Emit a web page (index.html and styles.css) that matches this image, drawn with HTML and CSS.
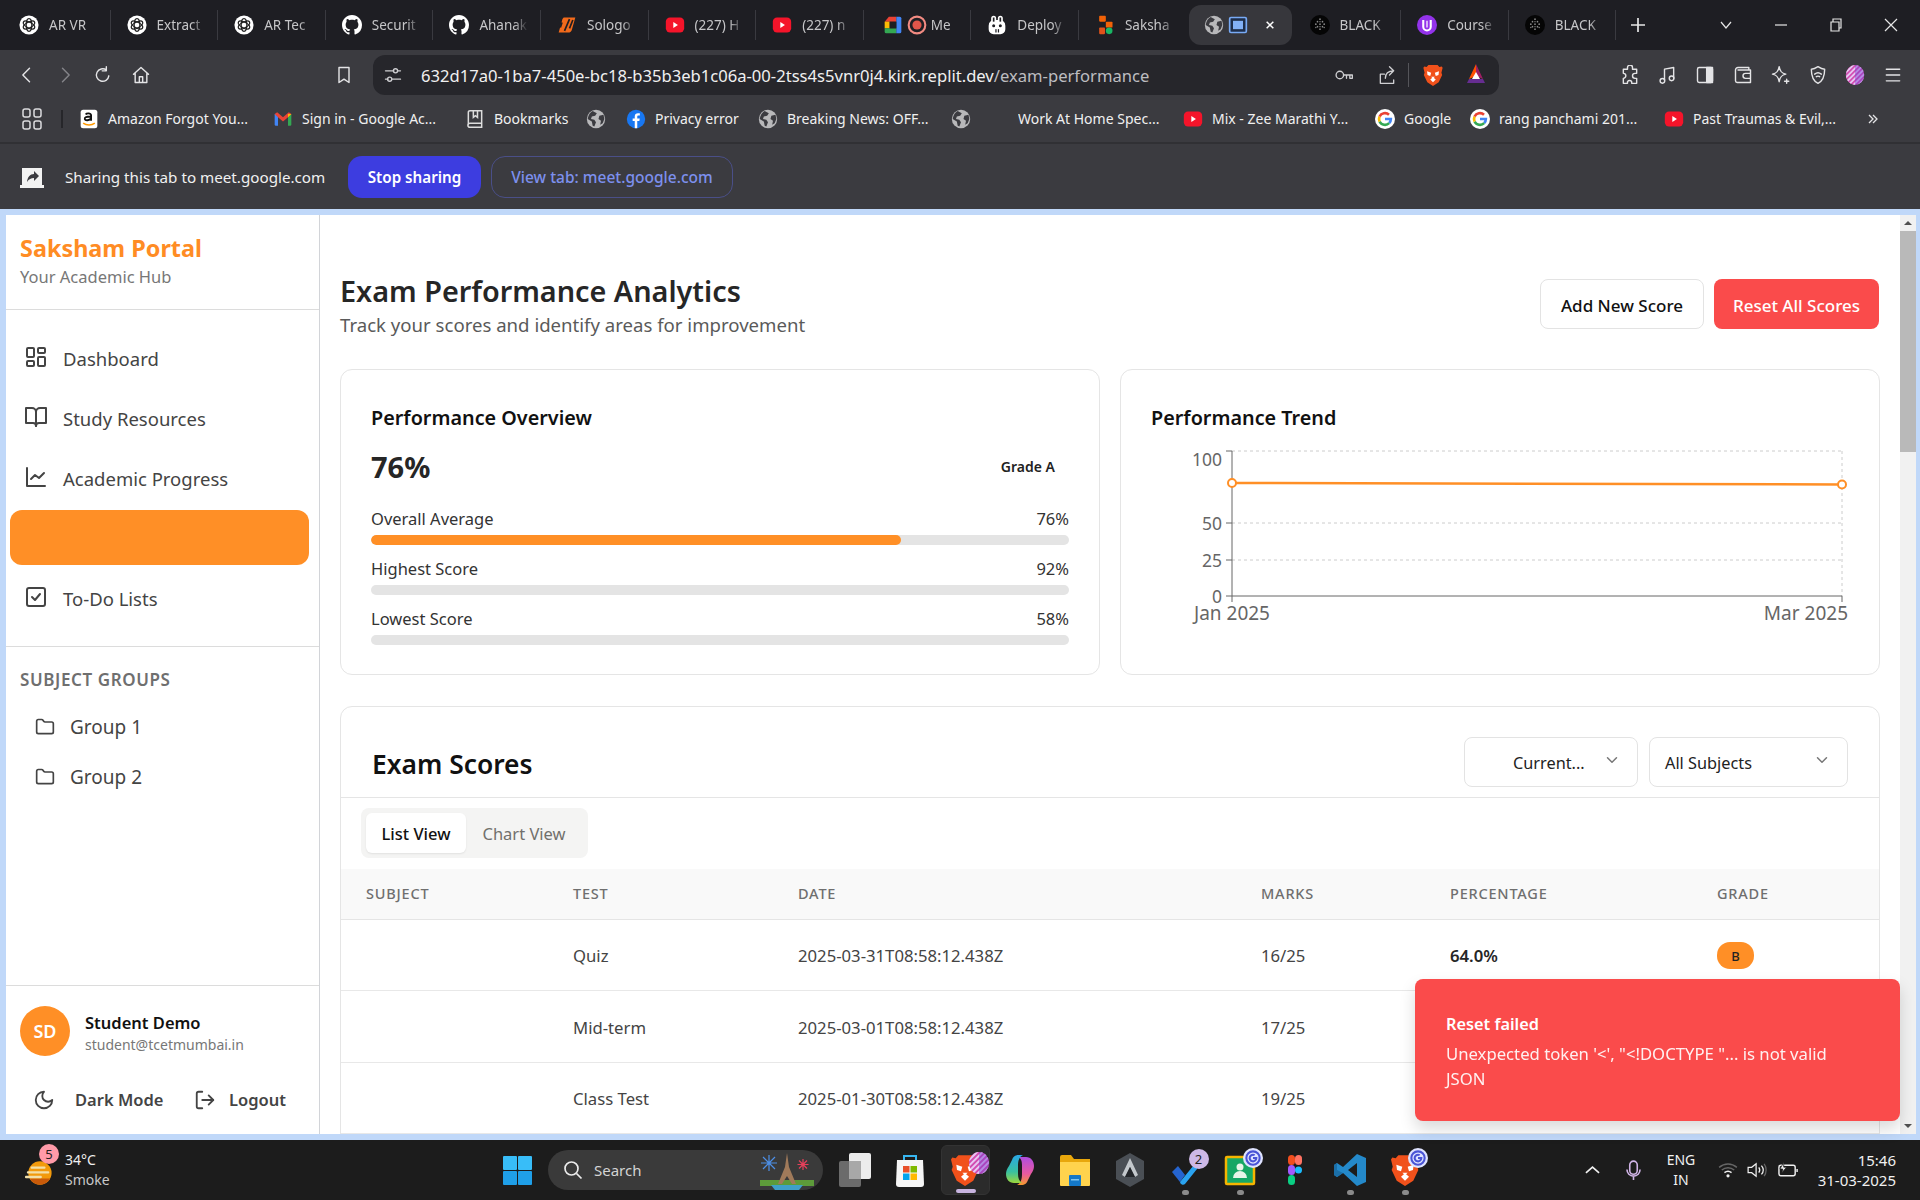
FILE: index.html
```html
<!DOCTYPE html>
<html lang="en">
<head>
<meta charset="utf-8">
<title>Exam Performance Analytics</title>
<link rel="stylesheet" href="styles.css">
</head>
<body>
<svg class="sprite" xmlns="http://www.w3.org/2000/svg">
  <defs>
    <linearGradient id="copA" x1="0" y1="0" x2="0" y2="1"><stop offset="0" stop-color="#2aa7e6"/><stop offset=".6" stop-color="#39c0a0"/><stop offset="1" stop-color="#9bd63c"/></linearGradient>
    <linearGradient id="copB" x1="0" y1="0" x2="0" y2="1"><stop offset="0" stop-color="#b04de0"/><stop offset=".6" stop-color="#e85aa0"/><stop offset="1" stop-color="#f59a2c"/></linearGradient>
  </defs>
  <symbol id="openai" viewBox="0 0 24 24"><circle cx="12" cy="12" r="11.5" fill="#fff"/><g fill="none" stroke="#222" stroke-width="1.5"><ellipse cx="12" cy="12" rx="3.4" ry="7.6"/><ellipse cx="12" cy="12" rx="3.4" ry="7.6" transform="rotate(60 12 12)"/><ellipse cx="12" cy="12" rx="3.4" ry="7.6" transform="rotate(120 12 12)"/></g></symbol>
  <symbol id="github" viewBox="0 0 16 16"><circle cx="8" cy="8" r="8" fill="#1e1e23"/><path fill="#fff" d="M8 0C3.58 0 0 3.58 0 8c0 3.54 2.29 6.53 5.47 7.59.4.07.55-.17.55-.38 0-.19-.01-.82-.01-1.49-2.01.37-2.53-.49-2.69-.94-.09-.23-.48-.94-.82-1.13-.28-.15-.68-.52-.01-.53.63-.01 1.08.58 1.23.82.72 1.21 1.87.87 2.33.66.07-.52.28-.87.51-1.07-1.78-.2-3.64-.89-3.64-3.95 0-.87.31-1.59.82-2.15-.08-.2-.36-1.02.08-2.12 0 0 .67-.21 2.2.82.64-.18 1.32-.27 2-.27.68 0 1.36.09 2 .27 1.53-1.04 2.2-.82 2.2-.82.44 1.1.16 1.92.08 2.12.51.56.82 1.27.82 2.15 0 3.07-1.87 3.75-3.65 3.95.29.25.54.73.54 1.48 0 1.07-.01 1.93-.01 2.2 0 .21.15.46.55.38A8.013 8.013 0 0016 8c0-4.42-3.58-8-8-8z"/></symbol>
  <symbol id="sologo" viewBox="0 0 24 24"><path fill="#f26a1b" d="M8 3h14l-4 14a5 5 0 0 1-5 4H2L6 7a5 5 0 0 1 2-4z"/><path fill="none" stroke="#1e1e23" stroke-width="2" d="M15 5 9 19M19 6l-4 10M6 9l-2 6"/></symbol>
  <symbol id="youtube" viewBox="0 0 24 24"><rect x="1" y="3" width="22" height="18" rx="5" fill="#f5142a"/><path fill="#fff" d="m10 8.500 5.500 3.500-5.500 3.500z"/></symbol>
  <symbol id="gmeet" viewBox="0 0 24 24"><path fill="#ea4335" d="M7 2h9v6H2z"/><path fill="#fbbc04" d="M2 8h6v8H2z"/><path fill="#34a853" d="M8 16h8v6H4a2 2 0 0 1-2-2v-4z"/><path fill="#4285f4" d="M16 2h4a2 2 0 0 1 2 2v16a2 2 0 0 1-2 2h-4z"/><rect x="8" y="8" width="8" height="8" fill="#1e1e23"/></symbol>
  <symbol id="rec" viewBox="0 0 24 24"><circle cx="12" cy="12" r="10" fill="none" stroke="#f28b82" stroke-width="2.500"/><circle cx="12" cy="12" r="5.500" fill="#e0554a"/></symbol>
  <symbol id="deploy" viewBox="0 0 24 24"><path fill="#fff" d="M8 1a3 3 0 0 1 3 3v2h2V4a3 3 0 0 1 6 0v3a7 7 0 0 1 3 6v4a6 6 0 0 1-6 6H8a6 6 0 0 1-6-6v-4a7 7 0 0 1 3-6V4a3 3 0 0 1 3-3z"/><g fill="#1e1e23"><rect x="7" y="3" width="2" height="5"/><rect x="15" y="3" width="2" height="5"/><circle cx="8" cy="13" r="1.800"/><circle cx="16" cy="13" r="1.800"/><rect x="10" y="17" width="1.500" height="4"/><rect x="13" y="17" width="1.500" height="4"/></g></symbol>
  <symbol id="saksham" viewBox="0 0 24 24"><rect x="5" y="1" width="8" height="7" rx="1" fill="#f26207"/><rect x="13" y="8" width="8" height="7" rx="1" fill="#f26207"/><rect x="5" y="15" width="7" height="8" rx="1" fill="#e0521a"/><circle cx="17" cy="19" r="4" fill="#19b664"/></symbol>
  <symbol id="globe" viewBox="0 0 24 24"><circle cx="12" cy="12" r="11" fill="#b8b8ba"/><path fill="#3b3b40" d="M8 2.500 13 5l-2 3-4 1-1 3 4 1 2 3-2 5-2-1-1-5-5-3C3 7 5 4 8 2.500zM16 8l5-1 1 5-2 5-3 2 1-5-3-2z"/></symbol>
  <symbol id="tabpreview" viewBox="0 0 24 24"><rect x="2" y="3" width="20" height="18" rx="1.500" fill="#1e2e4a" stroke="#78aaf5" stroke-width="2"/><rect x="6" y="7" width="12" height="10" fill="#82b1f7"/></symbol>
  <symbol id="black" viewBox="0 0 24 24"><circle cx="12" cy="12" r="12" fill="#050505"/><g fill="#8b8b8b"><circle cx="12" cy="5" r="1"/><circle cx="9" cy="8" r="1"/><circle cx="15" cy="8" r="1"/><circle cx="7" cy="11" r="1"/><circle cx="12" cy="11" r="1"/><circle cx="17" cy="11" r="1"/><circle cx="9" cy="14" r="1"/><circle cx="15" cy="14" r="1"/><circle cx="12" cy="17" r="1"/><circle cx="7" cy="15" r=".8"/><circle cx="17" cy="15" r=".8"/><circle cx="12" cy="14" r=".8"/><circle cx="12" cy="8" r=".8"/></g></symbol>
  <symbol id="course" viewBox="0 0 24 24"><circle cx="12" cy="12" r="12" fill="#9333ea"/><path fill="none" stroke="#fff" stroke-width="2.500" d="M7.500 6v8a4.500 4.500 0 0 0 9 0V6"/><path fill="none" stroke="#fff" stroke-width="1.500" d="M12 7v8"/></symbol>
  <symbol id="brave" viewBox="0 0 24 24"><path fill="#f1511b" d="M7 1h10l2 2.200 2.500-.5 1 1.500-1.300 5.300.8 2.500-3.800 8L12 24l-6.200-4-3.800-8 .8-2.500L1.500 4.200l1-1.500 2.500.5z"/><path fill="#fff" d="M5.500 8 10 9.500 9 13l-3-1zM18.500 8 14 9.500l1 3.500 3-1zM12 14.500l3 2.500-3 3-3-3z"/><path fill="#fff" d="M10 14h4l-2 2z"/></symbol>
  <symbol id="bat" viewBox="0 0 24 24"><path fill="#ff5000" d="M12 1 5 16l7-3z"/><path fill="#9e1f63" d="M12 1l7 15-7-3z"/><path fill="#662d91" d="M3 20h18l-2-4H5z"/><path fill="#fff" d="m12 9 4 7H8z"/></symbol>
  <symbol id="striped" viewBox="0 0 24 24"><clipPath id="ball"><ellipse cx="12" cy="12" rx="11" ry="12"/></clipPath><g clip-path="url(#ball)"><rect width="24" height="24" fill="#d24bb0"/><path stroke="#e7c6f2" stroke-width="2.200" d="M-2 12 12-2M-2 18 18-2M-2 24 24-2M2 26 26 2M8 26 26 8M14 26 26 14"/><path fill="#7a3fd0" opacity=".45" d="M12 0h12v24H12z"/></g></symbol>
  <symbol id="gmail" viewBox="0 0 24 24"><path fill="#4285f4" d="M2 6h4v14H3a1 1 0 0 1-1-1z"/><path fill="#34a853" d="M18 6h4v13a1 1 0 0 1-1 1h-3z"/><path fill="#ea4335" d="M2 6l3-2 7 6 7-6 3 2-4 4-6 5-6-5z"/><path fill="#fbbc04" d="m18 6 4 0-4 4z"/></symbol>
  <symbol id="bookmarks" viewBox="0 0 24 24"><g fill="none" stroke="#ddd" stroke-width="1.800"><path d="M4 19V4a2 2 0 0 1 2-2h14v15H6a2.500 2.500 0 0 0 0 5h14v-5"/><path d="M10 2v8l2.500-2 2.500 2V2"/></g></symbol>
  <symbol id="facebook" viewBox="0 0 24 24"><circle cx="12" cy="12" r="11" fill="#1877f2"/><path fill="#fff" d="M13.500 23v-8.500H16l.5-3h-3V9.500c0-1 .4-1.600 1.700-1.600h1.400V5.200c-.5-.1-1.300-.2-2.300-.2-2.300 0-3.800 1.400-3.800 3.900v2.600H8v3h2.500V23z"/></symbol>
  <symbol id="google" viewBox="0 0 24 24"><circle cx="12" cy="12" r="12" fill="#fff"/><path fill="none" stroke="#4285f4" stroke-width="3.200" d="M12 12h7a7.200 7.200 0 0 1-2 5"/><path fill="none" stroke="#34a853" stroke-width="3.200" d="M17 17a7.200 7.200 0 0 1-11.500-2"/><path fill="none" stroke="#fbbc04" stroke-width="3.200" d="M5.500 15a7.200 7.200 0 0 1 0-6"/><path fill="none" stroke="#ea4335" stroke-width="3.200" d="M5.500 9a7.200 7.200 0 0 1 11.300-2.200"/></symbol>
  <symbol id="dash" viewBox="0 0 24 24"><g fill="none" stroke="currentColor" stroke-width="2"><rect x="3" y="3" width="7" height="9" rx="1"/><rect x="14" y="3" width="7" height="5" rx="1"/><rect x="14" y="12" width="7" height="9" rx="1"/><rect x="3" y="16" width="7" height="5" rx="1"/></g></symbol>
  <symbol id="book" viewBox="0 0 24 24"><g fill="none" stroke="currentColor" stroke-width="2" stroke-linejoin="round"><path d="M2 3h6a4 4 0 0 1 4 4v14a3 3 0 0 0-3-3H2z"/><path d="M22 3h-6a4 4 0 0 0-4 4v14a3 3 0 0 1 3-3h7z"/></g></symbol>
  <symbol id="chart" viewBox="0 0 24 24"><g fill="none" stroke="currentColor" stroke-width="2" stroke-linecap="round" stroke-linejoin="round"><path d="M3 3v18h18"/><path d="m20 8-5 5-4-3-4 4"/></g></symbol>
  <symbol id="check" viewBox="0 0 24 24"><g fill="none" stroke="currentColor" stroke-width="2" stroke-linecap="round" stroke-linejoin="round"><rect x="3" y="3" width="18" height="18" rx="2"/><path d="m8 12 3 3 5-6"/></g></symbol>
  <symbol id="folder" viewBox="0 0 24 24"><path fill="none" stroke="currentColor" stroke-width="2" stroke-linejoin="round" d="M20 20a2 2 0 0 0 2-2V8a2 2 0 0 0-2-2h-7.900a2 2 0 0 1-1.690-.9L9.600 3.900A2 2 0 0 0 7.930 3H4a2 2 0 0 0-2 2v13a2 2 0 0 0 2 2Z"/></symbol>
  <symbol id="moon" viewBox="0 0 24 24"><path fill="none" stroke="currentColor" stroke-width="2" stroke-linejoin="round" d="M12 3a6 6 0 0 0 9 9 9 9 0 1 1-9-9Z"/></symbol>
  <symbol id="logout" viewBox="0 0 24 24"><g fill="none" stroke="currentColor" stroke-width="2" stroke-linecap="round" stroke-linejoin="round"><path d="M9 21H5a2 2 0 0 1-2-2V5a2 2 0 0 1 2-2h4"/><path d="m16 17 5-5-5-5"/><path d="M21 12H9"/></g></symbol>
  <symbol id="chev" viewBox="0 0 24 24"><path fill="none" stroke="currentColor" stroke-width="2" stroke-linecap="round" stroke-linejoin="round" d="m6 9 6 6 6-6"/></symbol>
</svg>

<header class="tabs">
  <div class="tab"><svg class="fav"><use href="#openai"/></svg><span class="tab-text">AR VR</span></div>
  <div class="tab"><svg class="fav"><use href="#openai"/></svg><span class="tab-text">Extract</span></div>
  <div class="tab"><svg class="fav"><use href="#openai"/></svg><span class="tab-text">AR Tec</span></div>
  <div class="tab"><svg class="fav"><use href="#github"/></svg><span class="tab-text">Securit</span></div>
  <div class="tab"><svg class="fav"><use href="#github"/></svg><span class="tab-text">Ahanak</span></div>
  <div class="tab"><svg class="fav"><use href="#sologo"/></svg><span class="tab-text">Sologo</span></div>
  <div class="tab"><svg class="fav"><use href="#youtube"/></svg><span class="tab-text">(227) H</span></div>
  <div class="tab"><svg class="fav"><use href="#youtube"/></svg><span class="tab-text">(227) n</span></div>
  <div class="tab tab-meet"><svg class="fav"><use href="#gmeet"/></svg><svg class="fav"><use href="#rec"/></svg><span class="tab-text">Me</span></div>
  <div class="tab"><svg class="fav"><use href="#deploy"/></svg><span class="tab-text">Deploy</span></div>
  <div class="tab tab-last"><svg class="fav"><use href="#saksham"/></svg><span class="tab-text">Saksha</span></div>
  <div class="tab-active"><svg class="fav"><use href="#globe"/></svg><svg class="fav"><use href="#tabpreview"/></svg><svg class="tab-x" viewBox="0 0 12 12"><path d="M2 2l8 8M10 2l-8 8"/></svg></div>
  <div class="tab"><svg class="fav"><use href="#black"/></svg><span class="tab-text">BLACK</span></div>
  <div class="tab"><svg class="fav"><use href="#course"/></svg><span class="tab-text">Course</span></div>
  <div class="tab"><svg class="fav"><use href="#black"/></svg><span class="tab-text">BLACK</span></div>
  <svg class="tab-plus" viewBox="0 0 14 14"><path d="M7 0v14M0 7h14"/></svg>
  <div class="win-controls">
    <svg class="win-icon" viewBox="0 0 14 14"><path d="m2 4 5 6 5-6"/></svg>
    <svg class="win-icon" viewBox="0 0 14 14"><path d="M1 7h12"/></svg>
    <svg class="win-icon" viewBox="0 0 14 14"><path d="M2 4h8v9H2zM4 4V1h8v9h-2"/></svg>
    <svg class="win-icon" viewBox="0 0 14 14"><path d="m1 1 12 12M13 1 1 13"/></svg>
  </div>
</header>

<nav class="toolbar">
  <div class="tool-group">
    <svg class="tool-icon" viewBox="0 0 24 24"><path d="m15 4-8 8 8 8"/></svg>
    <svg class="tool-icon tool-dim" viewBox="0 0 24 24"><path d="m9 4 8 8-8 8"/></svg>
    <svg class="tool-icon" viewBox="0 0 24 24"><path d="M19 13a7.500 7.500 0 1 1-3-7M16 2v5h-5"/></svg>
    <svg class="tool-icon" viewBox="0 0 24 24"><path d="M3 11 12 3l9 8M5 10v11h14V10M10 21v-7h4v7"/></svg>
  </div>
  <svg class="tool-icon tool-bookmark" viewBox="0 0 24 24"><path d="M6 3h12v18l-6-4-6 4z"/></svg>
  <div class="address">
    <svg class="tool-icon tool-small" viewBox="0 0 24 24"><path d="M3 7h10M18 7h3M3 17h3M11 17h10"/><circle cx="15" cy="7" r="2.500"/><circle cx="8" cy="17" r="2.500"/></svg>
    <span class="url">632d17a0-1ba7-450e-bc18-b35b3eb1c06a-00-2tss4s5vnr0j4.kirk.replit.dev<span class="url-path">/exam-performance</span></span>
    <div class="address-right">
      <svg class="tool-icon tool-small" viewBox="0 0 24 24"><circle cx="7" cy="12" r="4.500"/><path d="M11.500 12H22v4h-3v-3M15 13v3"/></svg>
      <svg class="tool-icon tool-small tool-share" viewBox="0 0 24 24"><path d="M4 22V11h5M4 22h16v-4M10 16c0-6 4-9 10-9M15 2l5 5-5 5"/></svg>
      <span class="address-sep"></span>
      <svg class="ext-brave"><use href="#brave"/></svg>
      <svg class="ext-bat"><use href="#bat"/></svg>
    </div>
  </div>
  <div class="tool-ext">
    <svg class="tool-icon" viewBox="0 0 24 24"><path d="M9 3a3 3 0 0 1 6 0v2h5v5h-2a3 3 0 0 0 0 6h2v6h-6v-2a3 3 0 0 0-5 0v2H4v-6a3 3 0 0 0 0-6V5h5z"/></svg>
    <svg class="tool-icon" viewBox="0 0 24 24"><path d="M9 18V5l11-2v13"/><circle cx="6.500" cy="19" r="2.800"/><circle cx="17.500" cy="16" r="2.800"/></svg>
    <svg class="tool-icon" viewBox="0 0 24 24"><rect x="3" y="3" width="18" height="18" rx="2"/><rect class="tool-fill" x="14" y="3" width="7" height="18"/></svg>
    <svg class="tool-icon" viewBox="0 0 24 24"><path d="M19 6V3H6a3 3 0 0 0-3 3v13a2 2 0 0 0 2 2h16V6H6M21 10h-6a3 3 0 0 0 0 6h6"/></svg>
    <svg class="tool-icon" viewBox="0 0 24 24"><path d="M11 2c1 6 3 8 8 9-5 1-7 3-8 9-1-6-3-8-8-9 5-1 7-3 8-9zM20 17v5M17.500 19.500h5"/></svg>
    <svg class="tool-icon" viewBox="0 0 24 24"><path d="M12 2c3 2 5 3 8 3 0 9-2 14-8 17C6 19 4 14 4 5c3 0 5-1 8-3z"/><path d="M8 11c2.500-2 5.500-2 8 0M10 14c1.500-1 2.500-1 4 0"/></svg>
    <svg class="ext-profile"><use href="#striped"/></svg>
    <svg class="tool-icon" viewBox="0 0 24 24"><path d="M4 5h16M4 12h16M4 19h16"/></svg>
  </div>
</nav>

<div class="bookmarks">
  <svg class="apps" viewBox="0 0 20 22"><g><rect x="1" y="1" width="7" height="8" rx="2"/><rect x="12" y="1" width="7" height="8" rx="2"/><rect x="1" y="13" width="7" height="8" rx="2"/><rect x="12" y="13" width="7" height="8" rx="2"/></g></svg>
  <span class="bm-sep"></span>
  <div class="bm"><svg class="fav" viewBox="0 0 24 24"><rect x="2" y="1" width="20" height="22" rx="3" fill="#fff"/><path fill="none" stroke="#111" stroke-width="2.200" d="M8 6.500c1-1.500 6-2 6.500 1v6.500M14.500 9c-7 0-8 1.500-7.500 3.200.5 1.800 5.500 2 7.500-1"/><path fill="none" stroke="#f90" stroke-width="1.800" d="M5 17c4 3 10 3 14 0"/></svg><span>Amazon Forgot You...</span></div>
  <div class="bm"><svg class="fav"><use href="#gmail"/></svg><span>Sign in - Google Ac...</span></div>
  <div class="bm"><svg class="fav"><use href="#bookmarks"/></svg><span>Bookmarks</span></div>
  <div class="bm"><svg class="fav"><use href="#globe"/></svg></div>
  <div class="bm"><svg class="fav"><use href="#facebook"/></svg><span>Privacy error</span></div>
  <div class="bm"><svg class="fav"><use href="#globe"/></svg><span>Breaking News: OFF...</span></div>
  <div class="bm"><svg class="fav"><use href="#globe"/></svg></div>
  <div class="bm"><span>Work At Home Spec...</span></div>
  <div class="bm"><svg class="fav"><use href="#youtube"/></svg><span>Mix - Zee Marathi Y...</span></div>
  <div class="bm"><svg class="fav"><use href="#google"/></svg><span>Google</span></div>
  <div class="bm"><svg class="fav"><use href="#google"/></svg><span>rang panchami 201...</span></div>
  <div class="bm"><svg class="fav"><use href="#youtube"/></svg><span>Past Traumas &amp; Evil,...</span></div>
  <svg class="bm-more" viewBox="0 0 12 12"><path d="m2 2 4 4-4 4M6 2l4 4-4 4"/></svg>
</div>

<div class="infobar">
  <svg class="share-icon" viewBox="0 0 26 24"><path fill="#f2f2f2" d="M3 3h20v17H3z"/><path fill="#f2f2f2" d="M1 20h24v3H1z"/><path fill="#3b3b40" d="m15 6 5 5-5 5v-3c-3 0-5 1-7 4 .5-5 3-8 7-8z"/></svg>
  <span class="info-text">Sharing this tab to meet.google.com</span>
  <span class="btn-stop">Stop sharing</span>
  <span class="btn-view">View tab: meet.google.com</span>
</div>

<div class="viewport">
  <aside class="sidebar">
    <div class="brand">
      <h1 class="brand-name">Saksham Portal</h1>
      <p class="brand-sub">Your Academic Hub</p>
    </div>
    <ul class="nav">
      <li class="nav-item"><svg class="nav-icon"><use href="#dash"/></svg>Dashboard</li>
      <li class="nav-item"><svg class="nav-icon"><use href="#book"/></svg>Study Resources</li>
      <li class="nav-item"><svg class="nav-icon"><use href="#chart"/></svg>Academic Progress</li>
      <li class="nav-item nav-active"></li>
      <li class="nav-item"><svg class="nav-icon"><use href="#check"/></svg>To-Do Lists</li>
    </ul>
    <div class="groups">
      <h2 class="groups-title">SUBJECT GROUPS</h2>
      <div class="group"><svg class="group-icon"><use href="#folder"/></svg>Group 1</div>
      <div class="group"><svg class="group-icon"><use href="#folder"/></svg>Group 2</div>
    </div>
    <div class="user">
      <div class="user-row">
        <div class="avatar">SD</div>
        <div class="user-info">
          <div class="user-name">Student Demo</div>
          <div class="user-mail">student@tcetmumbai.in</div>
        </div>
      </div>
      <div class="user-actions">
        <span class="action action-dark"><svg class="action-icon"><use href="#moon"/></svg>Dark Mode</span>
        <span class="action"><svg class="action-icon"><use href="#logout"/></svg>Logout</span>
      </div>
    </div>
  </aside>

  <main class="main">
    <div class="page-head">
      <div>
        <h1 class="page-title">Exam Performance Analytics</h1>
        <p class="page-sub">Track your scores and identify areas for improvement</p>
      </div>
      <div class="page-actions">
        <button class="btn btn-outline">Add New Score</button>
        <button class="btn btn-danger">Reset All Scores</button>
      </div>
    </div>

    <div class="cards">
      <section class="card">
        <h3 class="card-title">Performance Overview</h3>
        <div class="overview-row"><span class="big">76%</span><span class="grade">Grade A</span></div>
        <div class="metric"><div class="metric-label"><span>Overall Average</span><span>76%</span></div><div class="bar"><div class="bar-fill"></div></div></div>
        <div class="metric"><div class="metric-label"><span>Highest Score</span><span>92%</span></div><div class="bar"></div></div>
        <div class="metric"><div class="metric-label"><span>Lowest Score</span><span>58%</span></div><div class="bar"></div></div>
      </section>
      <section class="card">
        <h3 class="card-title">Performance Trend</h3>
        <svg class="trend" viewBox="0 0 698 195">
          <g class="grid-lines"><path d="M81 11H691M81 83H691M81 120H691M691 11V156"/></g>
          <g class="axis"><path d="M81 11V156H691M75 11H81M75 83H81M75 120H81M75 156H81M81 156V162M691 156V162"/></g>
          <g class="tick-y"><text x="71" y="26">100</text><text x="71" y="90">50</text><text x="71" y="127">25</text><text x="71" y="163">0</text></g>
          <g class="tick-x"><text x="81" y="180" class="tx-mid">Jan 2025</text><text x="697" y="180" class="tx-end">Mar 2025</text></g>
          <path class="trend-line" d="M81 43 691 44.500"/>
          <circle class="trend-dot" cx="81" cy="43" r="4"/><circle class="trend-dot" cx="691" cy="44.500" r="4"/>
        </svg>
      </section>
    </div>

    <section class="card card-table">
      <div class="table-head">
        <h2 class="table-title">Exam Scores</h2>
        <div class="selects">
          <div class="select select-term"><span>Current...</span><svg class="chev"><use href="#chev"/></svg></div>
          <div class="select select-subject"><span>All Subjects</span><svg class="chev"><use href="#chev"/></svg></div>
        </div>
      </div>
      <div class="view-row">
        <div class="view-tabs"><span class="view-tab view-on">List View</span><span class="view-tab">Chart View</span></div>
      </div>
      <table class="scores">
        <colgroup><col class="c1"><col class="c2"><col class="c3"><col class="c4"><col class="c5"><col></colgroup>
        <thead><tr><th>SUBJECT</th><th>TEST</th><th>DATE</th><th>MARKS</th><th>PERCENTAGE</th><th>GRADE</th></tr></thead>
        <tbody>
          <tr><td></td><td>Quiz</td><td>2025-03-31T08:58:12.438Z</td><td>16/25</td><td class="pct">64.0%</td><td><span class="badge">B</span></td></tr>
          <tr><td></td><td>Mid-term</td><td>2025-03-01T08:58:12.438Z</td><td>17/25</td><td></td><td></td></tr>
          <tr><td></td><td>Class Test</td><td>2025-01-30T08:58:12.438Z</td><td>19/25</td><td></td><td></td></tr>
        </tbody>
      </table>
    </section>
  </main>

  <div class="scrollbar">
    <svg class="scroll-arrow" viewBox="0 0 10 10"><path d="M5 3 9 7H1z"/></svg>
    <div class="scroll-thumb"></div>
    <div class="scroll-rest"></div>
    <svg class="scroll-arrow" viewBox="0 0 10 10"><path d="M5 7 1 3h8z"/></svg>
  </div>

  <div class="toast">
    <div class="toast-title">Reset failed</div>
    <div class="toast-text">Unexpected token '&lt;', "&lt;!DOCTYPE "... is not valid JSON</div>
  </div>
</div>

<footer class="taskbar">
  <div class="weather">
    <div class="sun">
      <svg viewBox="0 0 30 26"><circle cx="16" cy="13" r="12.500" fill="#f29a0c"/><path fill="#c85a0a" d="M5 19h22a12.500 12.500 0 0 1-22 0z"/><g fill="#f2dfa8"><rect x="6" y="6" width="16" height="2.500" rx="1"/><rect x="2" y="11" width="24" height="2.500" rx="1"/><rect x="0" y="16" width="18" height="2.500" rx="1"/></g></svg>
      <span class="sun-badge">5</span>
    </div>
    <div class="weather-text"><div>34°C</div><div class="weather-sub">Smoke</div></div>
  </div>
  <svg class="win-logo" viewBox="0 0 29 29"><g fill="#38bdf8"><rect width="14" height="14" rx="1"/><rect x="15" width="14" height="14" rx="1"/><rect y="15" width="14" height="14" rx="1" fill="#1f9fe8"/><rect x="15" y="15" width="14" height="14" rx="1" fill="#1f9fe8"/></g></svg>
  <div class="search">
    <svg class="search-icon" viewBox="0 0 20 20"><circle cx="8.500" cy="8.500" r="6.500"/><path d="m13.500 13.500 5 5"/></svg>
    <span class="search-text">Search</span>
    <svg class="search-art" viewBox="0 0 56 40"><path fill="#5d9b3a" d="M1 30h54v6H1z"/><path fill="#3fa0c8" d="M12 35h32l-4 5H16z"/><path fill="#a07a5a" d="M28 3l2 14 7 17h-4l-5-8-5 8h-4l7-17z"/><g stroke="#4d8fe6" stroke-width="1.200"><path d="M10 5v16M2 13h16M4 7l12 12M16 7 4 19"/></g><g stroke="#e6405a" stroke-width="1.200"><path d="M44 9v11M38.500 14.500h11M40 10.500l8 8M48 10.500l-8 8"/></g></svg>
  </div>
  <div class="task-apps">
    <div class="app"><svg class="app-icon" viewBox="0 0 32 34"><rect y="8" width="22" height="26" rx="2" fill="#6b6b6b"/><rect x="10" width="22" height="26" rx="2" fill="#ececec"/><rect x="10" y="8" width="12" height="18" fill="#a8a8a8"/></svg></div>
    <div class="app"><svg class="app-icon" viewBox="0 0 32 34"><path fill="none" stroke="#37b6f0" stroke-width="2" d="M10 8V3h12v5"/><path fill="#f6f6f6" d="M3 7h26l1 24a3 3 0 0 1-3 3H5a3 3 0 0 1-3-3z"/><rect x="9" y="13" width="6.500" height="6.500" fill="#e8502a"/><rect x="16.500" y="13" width="6.500" height="6.500" fill="#7fba00"/><rect x="9" y="20.500" width="6.500" height="6.500" fill="#00a4ef"/><rect x="16.500" y="20.500" width="6.500" height="6.500" fill="#ffb900"/></svg></div>
    <div class="app app-active"><svg class="app-icon app-brave"><use href="#brave"/></svg><svg class="app-corner app-ball"><use href="#striped"/></svg><span class="app-line"></span></div>
    <div class="app"><svg class="app-icon" viewBox="0 0 32 34"><path fill="url(#copB)" d="M14 4h8c5 0 8 4 8 9 0 3-1 5-3 8l-3 6c-1 3-3 5-7 5h-4c4-2 5-6 5-11V12c0-4-1-7-4-8z"/><path fill="url(#copA)" d="M18 30h-8c-5 0-8-4-8-9 0-3 1-5 3-8l3-6c1-3 3-5 7-5h4c-4 2-5 6-5 11v8c0 4 1 7 4 9z"/></svg></div>
    <div class="app"><svg class="app-icon" viewBox="0 0 32 34"><path fill="#e8a70c" d="M1 4a2 2 0 0 1 2-2h9l3 4h16v8H1z"/><path fill="#ffd34d" d="M1 9h30v23a1 1 0 0 1-1 1H2a1 1 0 0 1-1-1z"/><rect x="10" y="22" width="12" height="11" rx="1" fill="#1478c8"/><rect x="12" y="26" width="8" height="1.500" fill="#7fc6f0"/></svg></div>
    <div class="app"><svg class="app-icon" viewBox="0 0 32 34"><path fill="#4a4f55" d="M16 0 30 8v18l-14 8L2 26V8z"/><path fill="#c3c8cc" d="M16 5 24 22l-3 2-5-10-5 10-3-2z"/><path fill="#23262a" d="m16 14 5 10H11z"/></svg></div>
    <div class="app"><svg class="app-icon" viewBox="0 0 32 34"><path fill="#2564cf" d="M3 19 9 13l7 9-5 7z"/><path fill="#2aa3f0" d="M11 29 29 7l3 4-16 20a3 3 0 0 1-5-2z"/></svg><span class="app-count">2</span><span class="app-dot"></span></div>
    <div class="app"><svg class="app-icon" viewBox="0 0 32 34"><rect x="2" y="4" width="28" height="27" rx="1" fill="#16a765"/><rect x="2" y="4" width="28" height="27" rx="1" fill="none" stroke="#f5b400" stroke-width="2.500"/><circle cx="16" cy="14" r="3.500" fill="#e8f5e9"/><path fill="#e8f5e9" d="M9 25a7 7 0 0 1 14 0z"/></svg><svg class="app-corner" viewBox="0 0 24 24"><circle cx="12" cy="12" r="12" fill="#dfe3ff"/><circle cx="12" cy="12" r="8" fill="none" stroke="#4a54d6" stroke-width="2.500"/><path fill="none" stroke="#4a54d6" stroke-width="2.500" d="M12 12h4a4 4 0 1 1-2-3.400"/></svg><span class="app-dot"></span></div>
    <div class="app"><svg class="app-icon" viewBox="0 0 20 34"><rect x="3" y="2" width="7" height="10" rx="3.500" fill="#f24e1e"/><rect x="10" y="2" width="7" height="10" rx="3.500" fill="#ff7262"/><rect x="3" y="12" width="7" height="10" rx="3.500" fill="#a259ff"/><circle cx="13.500" cy="17" r="3.500" fill="#1abcfe"/><rect x="3" y="22" width="7" height="10" rx="3.500" fill="#0acf83"/></svg></div>
    <div class="app"><svg class="app-icon" viewBox="0 0 32 34"><path fill="#2489ca" d="M23 1 32 5v24l-9 4-14-13-6 4-3-2V12l3-2 6 4z"/><path fill="#1c1c1c" d="M23 10v14l-9-7z"/><path fill="#1b6fa8" d="m3 10-3 2v10l3 2 6-4-6-3z"/></svg><span class="app-dot"></span></div>
    <div class="app"><svg class="app-icon app-brave"><use href="#brave"/></svg><svg class="app-corner" viewBox="0 0 24 24"><circle cx="12" cy="12" r="12" fill="#dfe3ff"/><circle cx="12" cy="12" r="8" fill="none" stroke="#4a54d6" stroke-width="2.500"/><path fill="none" stroke="#4a54d6" stroke-width="2.500" d="M12 12h4a4 4 0 1 1-2-3.400"/></svg><span class="app-dot"></span></div>
  </div>
  <div class="tray">
    <svg class="tray-chev" viewBox="0 0 16 10"><path d="m1 8 7-6 7 6"/></svg>
    <svg class="tray-mic" viewBox="0 0 16 22"><rect x="4" y="1" width="8" height="14" rx="4"/><path d="M1 10a7 7 0 0 0 14 0M8 17v4"/></svg>
    <div class="tray-lang"><div>ENG</div><div>IN</div></div>
    <svg class="tray-wifi" viewBox="0 0 22 18"><path class="wifi-dim" d="M1 6c6-5 14-5 20 0"/><path class="wifi-dim" d="M4 9c4-3.500 10-3.500 14 0"/><path d="M7 12c2.500-2 5.500-2 8 0"/><circle cx="11" cy="15.500" r="1.800"/></svg>
    <svg class="tray-vol" viewBox="0 0 22 18"><path d="M1 6h4l5-4v14l-5-4H1z"/><path d="M13 6c1.500 2 1.500 4 0 6M16 4c2.500 3 2.500 7 0 10"/><path class="wifi-dim" d="M19 2c3 4 3 10 0 14"/></svg>
    <svg class="tray-bat" viewBox="0 0 22 16"><rect x="1" y="3" width="17" height="11" rx="2"/><path d="M20 7v3"/><path class="bat-bolt" d="M6 0 2 7h3l-1 4 5-6H6z"/></svg>
    <div class="tray-clock"><div>15:46</div><div>31-03-2025</div></div>
  </div>
</footer>
</body>
</html>
```
FILE: styles.css
```css
* { box-sizing: border-box; margin: 0; padding: 0; }
html, body { width: 1920px; height: 1200px; overflow: hidden; }
body { display: flex; flex-direction: column; font-family: "Noto Sans", "Open Sans", sans-serif; color: #222; background: #1c1c1c; }
.sprite { position: absolute; width: 0; height: 0; }
svg { display: block; flex: none; }
ul { list-style: none; }

/* tab strip */
.tabs { height: 50px; flex: none; display: flex; align-items: center; padding-left: 3px; background: #1e1e23; color: #c6c6c8; font-size: 13.500px; }
.tab { width: 107.600px; height: 30px; padding: 0 12px 0 16px; display: flex; align-items: center; gap: 10px; border-right: 1px solid #3a3a40; overflow: hidden; }
.tab-meet { padding-left: 19px; gap: 4px; }
.tab-last { border-right: none; }
.fav { width: 20px; height: 20px; }
.tab-text { flex: 1; min-width: 0; white-space: nowrap; overflow: hidden; -webkit-mask-image: linear-gradient(90deg, #000 72%, transparent); mask-image: linear-gradient(90deg, #000 72%, transparent); }
.tab-active { width: 103px; height: 40px; margin: 0 2px 0 2px; padding-left: 15px; display: flex; align-items: center; gap: 4px; background: #37373c; border-radius: 12px; }
.tab-x { width: 10px; height: 10px; margin-left: 13px; fill: none; stroke: #fff; stroke-width: 1.800; }
.tab-plus { width: 14px; height: 14px; margin-left: 15px; fill: none; stroke: #e6e6e6; stroke-width: 1.700; }
.win-controls { margin-left: auto; display: flex; align-items: center; padding-right: 22px; gap: 41px; }
.win-icon { width: 14px; height: 14px; fill: none; stroke: #e6e6e6; stroke-width: 1.200; }

/* toolbar */
.toolbar { height: 50px; flex: none; display: flex; align-items: center; padding: 0 8px; background: #3b3b40; }
.tool-group { display: flex; align-items: center; }
.tool-group .tool-icon { margin: 0 9px; }
.tool-icon { width: 20px; height: 20px; fill: none; stroke: #e4e4e6; stroke-width: 1.700; stroke-linecap: round; stroke-linejoin: round; }
.tool-dim { stroke: #85858a; }
.tool-fill { fill: #e4e4e6; }
.tool-bookmark { margin-left: 174px; }
.address { width: 1126px; height: 40px; margin-left: 19px; display: flex; align-items: center; padding: 0 11px 0 10px; background: #26262b; border-radius: 12px; }
.tool-small { stroke: #cfcfd2; stroke-width: 1.600; }
.url { margin-left: 18px; color: #f0f0f0; font-size: 16.600px; white-space: nowrap; }
.url-path { color: #bdbdc0; }
.address-right { margin-left: auto; display: flex; align-items: center; }
.tool-share { margin-left: 23px; }
.address-sep { width: 1px; height: 24px; margin: 0 13px 0 11px; background: #55555a; }
.ext-brave { width: 22px; height: 24px; }
.ext-bat { width: 24px; height: 26px; margin-left: 20px; }
.tool-ext { margin-left: auto; display: flex; align-items: center; padding-right: 9px; gap: 17.600px; }
.ext-profile { width: 20px; height: 22px; }

/* bookmarks */
.bookmarks { height: 44px; flex: none; display: grid; align-items: center; grid-template-columns: 43px 18px 194px 192px 121px 40px 132px 193px 67px 165px 192px 95px 194px 203px 20px; padding: 0 0 5px 18px; background: #3b3b40; border-bottom: 2px solid #303034; color: #f0f0f0; font-size: 14px; }
.apps { width: 20px; height: 22px; margin-left: 4px; fill: none; stroke: #dcdcde; stroke-width: 1.500; }
.bm-sep { width: 2px; height: 18px; background: #26262a; justify-self: start; }
.bm { display: flex; align-items: center; gap: 9px; white-space: nowrap; overflow: hidden; }
.bm-more { width: 12px; height: 12px; fill: none; stroke: #e4e4e6; stroke-width: 1.300; }

/* infobar */
.infobar { height: 65px; flex: none; display: flex; align-items: center; padding-left: 19px; background: #3b3b40; color: #f0f0f0; font-size: 15.200px; }
.share-icon { width: 26px; height: 24px; }
.info-text { width: 261px; margin-left: 20px; white-space: nowrap; }
.btn-stop { width: 133px; height: 42px; margin-left: 22px; display: flex; align-items: center; justify-content: center; background: #3d3de0; color: #fff; border-radius: 14px; font-weight: 600; }
.btn-view { width: 242px; height: 42px; margin-left: 10px; display: flex; align-items: center; justify-content: center; color: #7d90ee; border: 1px solid #4a4f88; border-radius: 14px; font-weight: 500; font-size: 15.500px; }

/* page */
.viewport { position: relative; flex: 1; min-height: 0; display: flex; padding: 6px 4px 6px 6px; background: #c0d8f9; }
.sidebar { width: 314px; flex: none; display: flex; flex-direction: column; background: #fff; border-right: 1px solid #d2d4d8; }
.brand { height: 95px; padding: 18px 0 0 14px; border-bottom: 1px solid #dcdcdc; }
.brand-name { font-size: 23.400px; line-height: 30px; font-weight: 700; color: #ff8c24; }
.brand-sub { margin-top: 2px; font-size: 16.500px; line-height: 24px; color: #777; }
.nav { padding: 20px 10px 21px 4px; display: flex; flex-direction: column; gap: 5px; border-bottom: 1px solid #dcdcdc; }
.nav-item { height: 55px; display: flex; align-items: center; gap: 15px; padding: 2px 0 0 14px; font-size: 18.500px; color: #444; border-radius: 12px; }
.nav-active { background: #ff8f26; }
.nav-icon { width: 24px; height: 24px; color: #444; margin-top: -3px; }
.groups { flex: 1; padding: 21px 0 0 14px; }
.groups-title { font-size: 17px; line-height: 24px; font-weight: 600; color: #6f6f6f; letter-spacing: .6px; margin-bottom: 10px; }
.group { height: 50px; display: flex; align-items: center; gap: 15px; padding-left: 15px; font-size: 19px; color: #444; }
.group-icon { width: 20px; height: 20px; color: #444; }
.user { height: 149px; padding: 20px 0 0 14px; border-top: 1px solid #dcdcdc; }
.user-row { display: flex; align-items: center; gap: 15px; }
.avatar { width: 50px; height: 50px; border-radius: 50%; background: #ff8f26; color: #fff; display: flex; align-items: center; justify-content: center; font-size: 18px; font-weight: 600; }
.user-info { padding-top: 5px; }
.user-name { font-size: 16.500px; line-height: 22px; font-weight: 600; color: #111; }
.user-mail { font-size: 14px; line-height: 22px; color: #777; }
.user-actions { display: flex; align-items: center; margin-top: 32px; padding-left: 13px; }
.action { display: flex; align-items: center; gap: 13px; font-size: 16.500px; font-weight: 600; color: #444; }
.action-dark { width: 161px; gap: 20px; }
.action-icon { width: 22px; height: 22px; color: #444; }

.main { flex: 1; min-width: 0; overflow: hidden; padding: 56px 20px 0; background: #fff; }
.page-head { display: flex; justify-content: space-between; align-items: flex-start; margin-bottom: 30px; }
.page-title { font-size: 28.800px; line-height: 39px; font-weight: 600; color: #262626; }
.page-sub { font-size: 18.600px; line-height: 29px; color: #5a5a5a; }
.page-actions { display: flex; gap: 10px; margin: 8px 1px 0 0; }
.btn { height: 50px; padding-top: 2px; border-radius: 8px; font: 500 17px "Noto Sans", sans-serif; }
.btn-outline { width: 164px; background: #fff; color: #111; border: 1px solid #e3e3e3; }
.btn-danger { width: 165px; background: #fa4b4b; color: #fff; border: none; }
.cards { display: grid; grid-template-columns: minmax(0, 1fr) minmax(0, 1fr); gap: 20px; }
.card { border: 1px solid #e5e5e5; border-radius: 12px; background: #fff; padding: 30px; height: 306px; }
.card-title { font-size: 19.800px; line-height: 36px; font-weight: 600; color: #111; }
.overview-row { display: flex; align-items: center; justify-content: space-between; height: 44px; margin-top: 8px; padding-right: 14px; }
.big { font-size: 29px; font-weight: 700; color: #262626; }
.grade { font-size: 14px; font-weight: 600; color: #222; }
.metric { margin-top: 19px; }
.metric + .metric { margin-top: 12px; }
.metric-label { display: flex; justify-content: space-between; font-size: 16.500px; line-height: 24px; color: #333; margin-bottom: 4px; }
.bar { height: 10px; background: #e4e4e4; border-radius: 5px; overflow: hidden; }
.bar-fill { width: 76%; height: 100%; background: #ff8f26; border-radius: 5px; }
.trend { width: 698px; height: 195px; margin-top: 4px; }
.grid-lines path { fill: none; stroke: #ccc; stroke-width: 1; stroke-dasharray: 3 3; }
.axis path { fill: none; stroke: #666; stroke-width: 1; }
.tick-y text { font-size: 17.500px; fill: #666; text-anchor: end; }
.tick-x text { font-size: 19px; fill: #666; }
.tx-mid { text-anchor: middle; }
.tx-end { text-anchor: end; }
.trend-line { fill: none; stroke: #ff8f26; stroke-width: 2.500; }
.trend-dot { fill: #fff; stroke: #ff8f26; stroke-width: 2; }

.card-table { height: auto; margin-top: 31px; padding: 0; border-radius: 12px 12px 0 0; }
.table-head { height: 91px; padding: 30px 31px 10px; display: flex; justify-content: space-between; align-items: center; border-bottom: 1px solid #e5e5e5; }
.table-title { padding-top: 3px; font-size: 26.400px; font-weight: 600; color: #111; }
.selects { display: flex; gap: 11px; }
.select { height: 50px; padding-top: 1px; border: 1px solid #e3e3e3; border-radius: 8px; display: flex; align-items: center; font-size: 16.300px; color: #222; }
.select-term { width: 174px; padding-left: 48px; padding-right: 16px; justify-content: space-between; }
.select-subject { width: 199px; padding-left: 15px; padding-right: 16px; justify-content: space-between; }
.chev { width: 18px; height: 18px; color: #777; margin-top: -5px; }
.view-row { height: 71px; padding: 10px 0 0 20px; }
.view-tabs { width: 227px; height: 50px; padding: 5px; display: flex; background: #f4f4f3; border-radius: 8px; font-size: 16.500px; color: #71706c; }
.view-tab { display: flex; align-items: center; justify-content: center; width: 116px; }
.view-on { width: 100px; background: #fff; border-radius: 6px; color: #111; font-weight: 500; box-shadow: 0 1px 2px rgba(0,0,0,.08); }
.scores { width: 100%; border-collapse: collapse; table-layout: fixed; }
.c1 { width: 207px; }
.c2 { width: 225px; }
.c3 { width: 463px; }
.c4 { width: 189px; }
.c5 { width: 267px; }
.scores th { height: 50px; padding: 0 0 2px 25px; background: #f9f9f9; border-bottom: 1px solid #e5e5e5; text-align: left; font-size: 14.500px; font-weight: 500; color: #6f6f6f; letter-spacing: .8px; }
.scores td { height: 71.500px; padding: 2px 0 0 25px; border-bottom: 1px solid #e8e8e8; font-size: 16.700px; color: #444; }
.scores .pct { font-weight: 600; color: #262626; }
.badge { display: inline-flex; align-items: center; justify-content: center; width: 37px; height: 27px; border-radius: 13px; background: #ff8f26; color: #222; font-size: 13px; font-weight: 500; vertical-align: middle; }

.scrollbar { width: 16px; flex: none; display: flex; flex-direction: column; background: #f1f1f1; }
.scroll-arrow { width: 16px; height: 16px; padding: 3px; fill: #505050; }
.scroll-thumb { height: 221px; background: #b9b9b9; }
.scroll-rest { flex: 1; }

.toast { position: absolute; right: 20px; bottom: 19px; width: 485px; height: 142px; padding: 29px 44px 0 31px; background: #fa4b4b; color: #fff; border-radius: 8px; box-shadow: 0 8px 16px rgba(0,0,0,.15); }
.toast-title { font-size: 16.300px; line-height: 32px; font-weight: 600; }
.toast-text { font-size: 16.700px; line-height: 25px; opacity: .92; margin-top: 1px; }

/* taskbar */
.taskbar { height: 60px; flex: none; display: flex; align-items: center; background: #1c1c1c; color: #f0f0f0; }
.weather { width: 503px; flex: none; display: flex; align-items: center; padding-left: 25px; gap: 12px; font-size: 14px; line-height: 20px; }
.sun { position: relative; width: 28px; height: 26px; margin-top: 6px; }
.sun svg { width: 28px; height: 26px; }
.sun-badge { position: absolute; left: 14px; top: -16px; width: 20px; height: 20px; border-radius: 50%; background: #ff9aa8; color: #222; font-size: 13px; display: flex; align-items: center; justify-content: center; }
.weather-sub { color: #c8c8c8; }
.win-logo { width: 29px; height: 29px; }
.search { width: 275px; height: 40px; margin-left: 16px; display: flex; align-items: center; padding: 0 8px 0 15px; background: #3a3a3a; border-radius: 20px; }
.search-icon { width: 20px; height: 20px; fill: none; stroke: #ececec; stroke-width: 1.700; }
.search-text { margin-left: 11px; font-size: 15px; color: #d4d4d4; }
.search-art { width: 56px; height: 40px; margin-left: auto; }
.task-apps { display: flex; margin-left: 4.500px; }
.app { position: relative; width: 55px; height: 50px; display: flex; align-items: center; justify-content: center; }
.app-active { background: #2b2b2b; border: 1px solid #333; border-radius: 6px; width: 49px; margin: 0 3px; }
.app-icon { width: 32px; height: 34px; }
.app-corner { position: absolute; left: 30px; top: 3px; width: 20px; height: 20px; }
.app-ball { left: 26px; top: 5px; width: 22px; height: 24px; }
.app-line { position: absolute; left: 14px; bottom: 1px; width: 20px; height: 4px; border-radius: 2px; background: #c8b4e0; }
.app-dot { position: absolute; left: 24px; bottom: 0; width: 7px; height: 5px; border-radius: 3px; background: #8a8a8a; }
.app-count { position: absolute; left: 31px; top: 4px; width: 20px; height: 20px; border-radius: 50%; background: #cdb8e6; color: #222; font-size: 13px; display: flex; align-items: center; justify-content: center; }
.tray { margin-left: auto; display: flex; align-items: center; padding-right: 24px; font-size: 14px; line-height: 20px; }
.tray-chev { width: 15px; height: 10px; fill: none; stroke: #f0f0f0; stroke-width: 1.800; }
.tray-mic { width: 15px; height: 21px; margin-left: 26px; fill: none; stroke: #d0b4e6; stroke-width: 1.700; }
.tray-lang { width: 40px; margin-left: 20px; text-align: center; }
.tray-wifi { width: 20px; height: 16px; margin-left: 17px; fill: none; stroke: #f0f0f0; stroke-width: 1.600; }
.tray-wifi circle { fill: #f0f0f0; stroke: none; }
.wifi-dim { stroke: #666; }
.tray-vol { width: 20px; height: 16px; margin-left: 9px; fill: none; stroke: #f0f0f0; stroke-width: 1.400; }
.tray-bat { width: 21px; height: 16px; margin-left: 11px; fill: none; stroke: #f0f0f0; stroke-width: 1.500; }
.bat-bolt { fill: #f0f0f0; stroke: #1c1c1c; stroke-width: .8; }
.tray-clock { width: 80px; margin-left: 17px; text-align: right; white-space: nowrap; font-size: 15px; }
```
